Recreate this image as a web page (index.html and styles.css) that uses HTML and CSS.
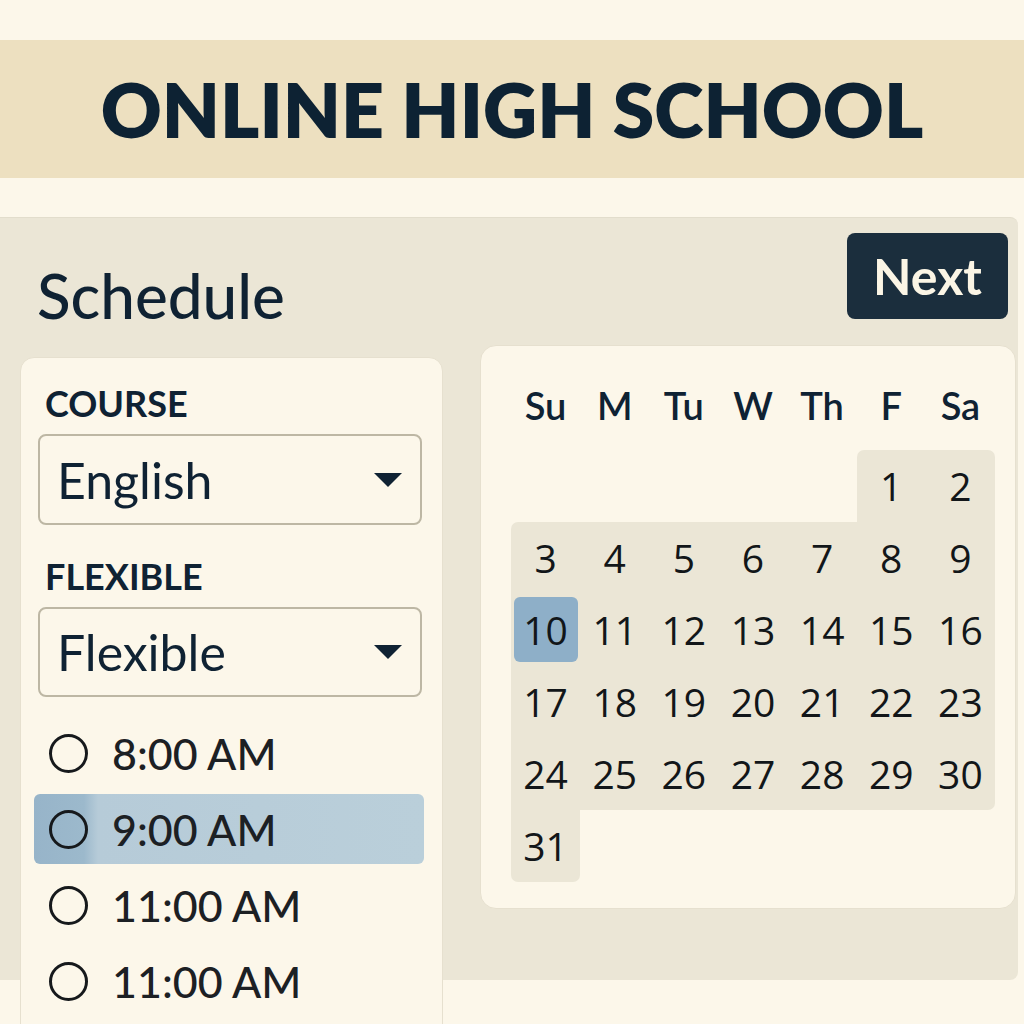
FILE: index.html
```html
<!DOCTYPE html>
<html lang="en">
<head>
<meta charset="utf-8">
<title>Online High School – Schedule</title>
<link rel="stylesheet" href="styles.css">
</head>
<body>
<div class="page">
  <header class="band">
    <h1 class="title">ONLINE HIGH SCHOOL</h1>
  </header>

  <main class="panel">
    <div class="panel-top">
      <h2 class="heading">Schedule</h2>
      <button class="next" type="button">Next</button>
    </div>

    <div class="panel-body">
      <section class="form-card">
        <div class="field-label">COURSE</div>
        <div class="select select-course"><span>English</span><span class="caret"></span></div>

        <div class="field-label">FLEXIBLE</div>
        <div class="select select-flex"><span>Flexible</span><span class="caret"></span></div>

        <ul class="times">
          <li class="time"><span class="radio"></span><span>8:00 AM</span></li>
          <li class="time selected"><span class="radio"></span><span>9:00 AM</span></li>
          <li class="time"><span class="radio"></span><span>11:00 AM</span></li>
          <li class="time"><span class="radio"></span><span>11:00 AM</span></li>
        </ul>
      </section>

      <section class="calendar">
        <div class="weekdays">
          <span>Su</span><span>M</span><span>Tu</span><span>W</span><span>Th</span><span>F</span><span>Sa</span>
        </div>
        <div class="days">
          <span class="blank"></span><span class="blank"></span><span class="blank"></span><span class="blank"></span><span class="blank"></span>
          <span class="day r-tl">1</span><span class="day r-tr">2</span>
          <span class="day r-tl">3</span><span class="day">4</span><span class="day">5</span><span class="day">6</span><span class="day">7</span><span class="day">8</span><span class="day">9</span>
          <span class="day today"><span class="mark">10</span></span><span class="day">11</span><span class="day">12</span><span class="day">13</span><span class="day">14</span><span class="day">15</span><span class="day">16</span>
          <span class="day">17</span><span class="day">18</span><span class="day">19</span><span class="day">20</span><span class="day">21</span><span class="day">22</span><span class="day">23</span>
          <span class="day">24</span><span class="day">25</span><span class="day">26</span><span class="day">27</span><span class="day">28</span><span class="day">29</span><span class="day r-br">30</span>
          <span class="day r-bl r-br">31</span>
        </div>
      </section>
    </div>
  </main>
</div>
</body>
</html>
```

FILE: styles.css
```css
* {
  box-sizing: border-box;
}

html, body {
  margin: 0;
  padding: 0;
  background: #fcf7ea;
  overflow: hidden;
}

body {
  font-family: "Lato", "Open Sans", sans-serif;
  color: #0f2233;
}

.page {
  width: 1024px;
  height: 1024px;
  padding-top: 40px;
  overflow: hidden;
}

/* Title band */
.band {
  height: 138px;
  background: #ede0c0;
  display: flex;
  align-items: center;
  justify-content: center;
}

.title {
  margin: 0;
  font-family: "Lato", sans-serif;
  font-weight: 800;
  font-size: 75px;
  letter-spacing: 0;
  line-height: 1;
  color: #0d2233;
}

/* Main panel */
.panel {
  margin-top: 39px;
  margin-right: 6px;
  height: 763px;
  background: #ebe6d6;
  border-radius: 0 8px 8px 0;
  border-top: 1px solid #e2ddcc;
  padding: 14px 2px 0 20px;
}

.panel-top {
  height: 113px;
  display: flex;
  justify-content: space-between;
  align-items: flex-start;
}

.heading {
  margin: 26px 0 0 17px;
  font-size: 62px;
  font-weight: 500;
  line-height: 1.2;
  color: #0f2233;
}

.next {
  width: 161px;
  height: 86px;
  margin: 1px 8px 0 0;
  background: #1b2e3d;
  border: none;
  border-radius: 8px;
  color: #fbf5e5;
  font-family: "Lato", sans-serif;
  font-weight: 700;
  font-size: 50px;
  padding: 0;
}

.panel-body {
  display: flex;
  align-items: flex-start;
  gap: 37px;
}

/* Left form card */
.form-card {
  width: 423px;
  min-height: 700px;
  margin-top: 12px;
  background: #fcf7ea;
  border-radius: 14px;
  border: 1px solid #e6e0cf;
  padding: 24px 20px 30px 17px;
}

.field-label {
  padding-left: 7px;
  font-size: 36px;
  font-weight: 700;
  line-height: 1.2;
  color: #0f2233;
}

.select {
  margin-top: 9px;
  height: 91px;
  border: 2px solid #bdb7a4;
  border-radius: 8px;
  padding: 0 18px 0 17px;
  display: flex;
  align-items: center;
  justify-content: space-between;
  font-size: 50px;
  font-weight: 400;
  color: #0f2233;
}

.select-course {
  margin-bottom: 30px;
}

.select-flex {
  height: 90px;
  margin-bottom: 21px;
}

.caret {
  width: 0;
  height: 0;
  border-left: 14px solid transparent;
  border-right: 14px solid transparent;
  border-top: 14px solid #0f2233;
}

.times {
  list-style: none;
  margin: 0 -2px 0 -4px;
  padding: 0;
  display: flex;
  flex-direction: column;
  gap: 6px;
}

.time {
  height: 70px;
  padding-left: 15px;
  display: flex;
  align-items: center;
  gap: 24px;
  font-size: 43px;
  font-weight: 500;
  color: #1c2024;
  border-radius: 6px;
}

.time.selected {
  background: linear-gradient(90deg, #97b4c9 0, #9cb9cc 50px, #b6cbd8 64px, #bacfda 100%);
}

.radio {
  width: 39px;
  height: 39px;
  border: 3px solid #16191c;
  border-radius: 50%;
  flex: none;
}

/* Calendar card */
.calendar {
  width: 536px;
  height: 564px;
  background: #fcf7ea;
  border-radius: 16px;
  border: 1px solid #e6e0cf;
  padding: 37px 20px 0 30px;
}

.weekdays {
  display: grid;
  grid-template-columns: repeat(7, 1fr);
  text-align: center;
  font-size: 38px;
  font-weight: 600;
  line-height: 1.2;
  color: #0f2233;
}

.days {
  margin-top: 21px;
  display: grid;
  grid-template-columns: repeat(7, 1fr);
  grid-auto-rows: 72px;
  font-family: "Open Sans", sans-serif;
  font-size: 39px;
  font-weight: 500;
  color: #121619;
}

.day {
  background: #ebe6d6;
  display: flex;
  align-items: center;
  justify-content: center;
}

.r-tl { border-top-left-radius: 7px; }
.r-tr { border-top-right-radius: 7px; }
.r-bl { border-bottom-left-radius: 7px; }
.r-br { border-bottom-right-radius: 7px; }

.today .mark {
  width: 64px;
  height: 65px;
  background: #8eafc8;
  border-radius: 6px;
  display: flex;
  align-items: center;
  justify-content: center;
}
```
